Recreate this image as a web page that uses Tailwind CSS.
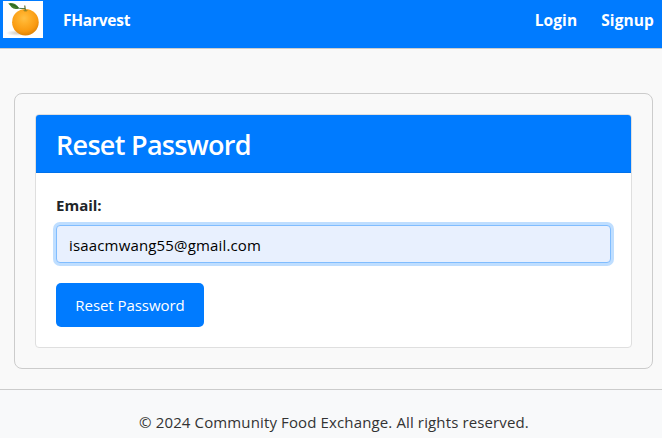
<!DOCTYPE html>
<html lang="en">
<head>
<meta charset="utf-8">
<title>FHarvest</title>
<script src="https://cdn.jsdelivr.net/npm/@tailwindcss/browser@4"></script>
</head>
<body class="w-[662px] h-[438px] overflow-hidden bg-[#f9f9f9] font-['Open_Sans','Noto_Sans',sans-serif] text-[15px] leading-6 text-[#212529]">
<header class="h-[49px] bg-[#007bff] border-b border-[#ccc] flex items-start pl-[3px] pr-2 text-white font-bold">
  <svg class="mt-px w-10 h-[37px] shrink-0" viewBox="0 0 40 37">
    <defs>
      <radialGradient id="peel" cx="45%" cy="35%" r="66%">
        <stop offset="0" stop-color="#ffc044"/><stop offset=".3" stop-color="#ffb02a"/><stop offset=".75" stop-color="#f99a10"/><stop offset="1" stop-color="#dd8206"/>
      </radialGradient>
      <radialGradient id="shade"><stop offset="0" stop-color="#d2ccc2"/><stop offset="1" stop-color="#fff"/></radialGradient>
    </defs>
    <rect width="40" height="37" fill="#fff"/>
    <ellipse cx="14" cy="32" rx="11" ry="3" fill="url(#shade)"/>
    <ellipse cx="22.400" cy="21.200" rx="13.300" ry="13.200" fill="url(#peel)"/>
    <path d="M20 9.300q2.500-1.300 5 0l-1.500 1.200h-2z" fill="#a98a20"/>
    <path d="M22.500 9.500Q22 6.500 21.700 4.500" fill="none" stroke="#6f7a3a" stroke-width="1.300"/>
    <path d="M5.200 2.400Q8.500 1.500 12 3 15 4.500 16 7.500 11 9 8.500 6.200 7 4 5.200 2.400z" fill="#3f7d2b"/>
    <path d="M7 3q5 1.500 9.500 4.400l5.500.2" fill="none" stroke="#245c1c" stroke-width=".8"/>
  </svg>
  <span class="ml-5 mt-2 text-[15.500px] tracking-[-0.25px]">FHarvest</span>
  <nav class="ml-auto mt-2 flex gap-6 text-[15.500px] tracking-[0.1px]">
    <a>Login</a>
    <a>Signup</a>
  </nav>
</header>
<main class="mt-11 ml-[14px] w-[639px] h-[276px] border border-[#ccc] rounded-lg p-5">
  <section class="h-[234px] bg-white border border-[#dfdfdf] rounded-[4px] overflow-hidden">
    <h1 class="h-[58px] bg-[#007bff] border-b border-[#0071eb] pl-5 pt-[13px] text-[27px] leading-[34px] font-semibold text-white tracking-[-0.7px]">Reset Password</h1>
    <form class="px-5 pt-5">
      <label class="block h-8 font-bold" for="email">Email:</label>
      <input id="email" type="text" value="isaacmwang55@gmail.com" class="block w-full h-[38px] px-3 pt-px border border-[#80bdff] rounded-[4px] bg-[#e8f0fe] text-black outline-none tracking-[0.16px] shadow-[0_0_0_3px_#bfdeff]">
      <button type="button" class="mt-5 w-[148px] h-11 rounded-[5px] bg-[#007bff] text-white tracking-[-0.06px]">Reset Password</button>
    </form>
  </section>
</main>
<footer class="mt-5 h-[70px] border-t border-[#ccc] bg-[#f8f9fa] pt-5 pl-[6px] text-center text-[#333] tracking-[0.13px]">© 2024 Community Food Exchange. All rights reserved.</footer>
</body>
</html>
